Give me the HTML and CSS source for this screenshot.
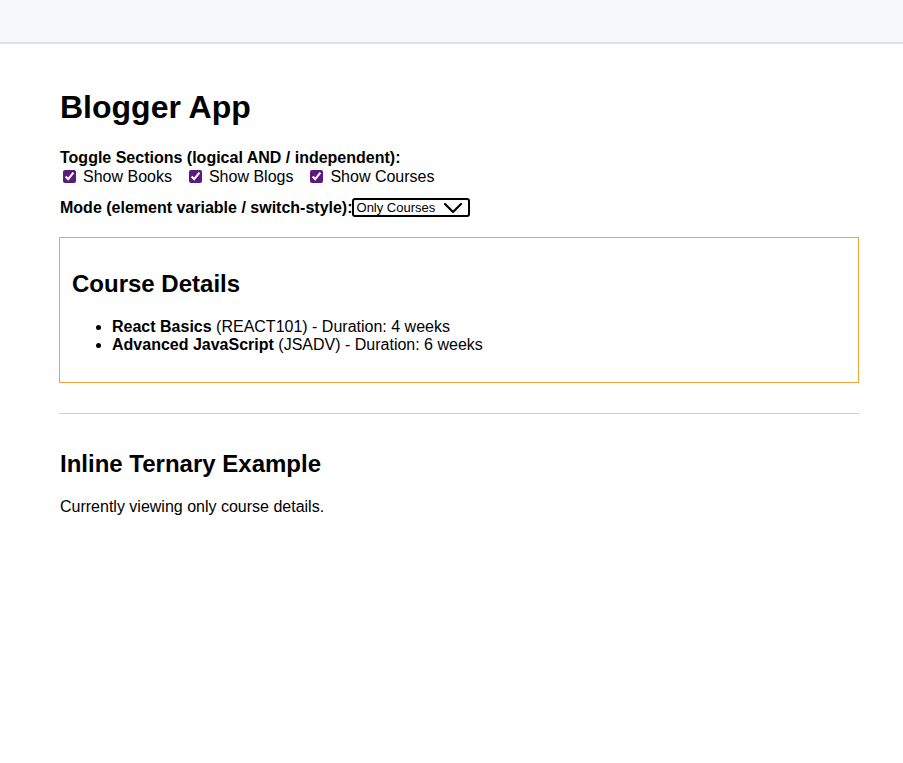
FILE: index.html
```html
<!DOCTYPE html>
<html>
<head>
<meta charset="utf-8">
<link rel="stylesheet" href="styles.css">
</head>
<body>
<div class="topbar"></div>
<main class="app">
  <h1>Blogger App</h1>
  <div class="toggles">
    <div class="label">Toggle Sections (logical AND / independent):</div>
    <div class="checks">
      <label class="check"><input type="checkbox" checked> Show Books</label>
      <label class="check"><input type="checkbox" checked> Show Blogs</label>
      <label class="check"><input type="checkbox" checked> Show Courses</label>
    </div>
  </div>
  <div class="mode">
    <span class="label">Mode (element variable / switch-style):</span><span class="sel-wrap"><select class="sel"><option>Only Courses</option></select><svg class="chev" width="20" height="12" viewBox="0 0 20 12"><path d="M2 2 L10 10 L18 2" fill="none" stroke="#000" stroke-width="2.2" stroke-linecap="round" stroke-linejoin="round"/></svg></span>
  </div>
  <section class="card">
    <h2>Course Details</h2>
    <ul>
      <li><strong>React Basics</strong> (REACT101) - Duration: 4 weeks</li>
      <li><strong>Advanced JavaScript</strong> (JSADV) - Duration: 6 weeks</li>
    </ul>
  </section>
  <hr>
  <h2 class="inline-title">Inline Ternary Example</h2>
  <p>Currently viewing only course details.</p>
</main>
</body>
</html>
```
FILE: styles.css
```css
html, body {
  margin: 0;
  padding: 0;
  background: #fff;
  font-family: "Liberation Sans", Arial, sans-serif;
  color: #000;
}
.topbar {
  height: 42px;
  background: #f5f9fa;
  border-bottom: 2px solid #dde3e6;
}
.app {
  width: 800px;
  padding: 24px 0 0 59px;
}
h1 {
  font-size: 32px;
  margin: 21px 0 23px 1px;
}
.label {
  font-weight: bold;
  font-size: 16px;
}
.toggles .label {
  margin-left: 1px;
}
.checks {
  display: flex;
}
.check {
  font-size: 16px;
  display: inline-flex;
  align-items: center;
  margin-right: 13px;
}
.check input {
  accent-color: #5b1a7d;
  margin: 3px 7px 3px 4px;
  width: 13px;
  height: 13px;
}
.mode {
  margin-top: 12px;
  display: flex;
  align-items: center;
  margin-left: 1px;
}
.sel-wrap {
  position: relative;
  display: inline-block;
  height: 19px;
  margin-left: -1px;
}
.sel {
  appearance: none;
  -webkit-appearance: none;
  font-family: "Liberation Sans", Arial, sans-serif;
  font-size: 13px;
  color: #000;
  border: 2px solid #000;
  border-radius: 3px;
  height: 19px;
  width: 118px;
  padding: 0 0 0 3px;
  background: #fff;
  margin: 0;
  display: block;
}
.chev {
  position: absolute;
  left: 91px;
  top: 4px;
  pointer-events: none;
}
.card {
  margin-top: 20px;
  border: 1px solid #f4a23a;
  padding: 12px;
}
.card h2 {
  font-size: 24px;
  margin: 20px 0;
}
.card ul {
  margin: 0 0 16px 0;
  padding-left: 40px;
  font-size: 16px;
  line-height: 18px;
}
hr {
  border: none;
  border-top: 1px solid #ccc;
  margin: 30px 0 0 0;
}
.inline-title {
  font-size: 24px;
  margin: 36px 0 0 1px;
}
p {
  font-size: 16px;
  margin: 20px 0 0 1px;
}
```
